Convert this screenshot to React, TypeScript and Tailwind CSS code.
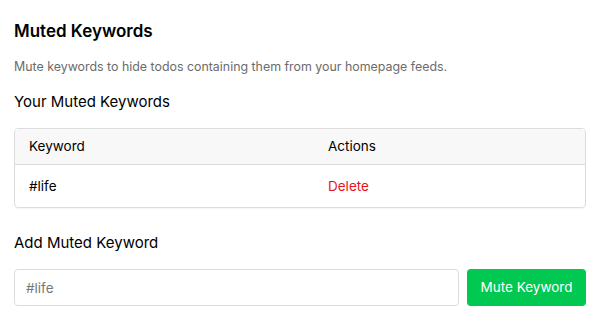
import { useState } from 'react';

export default function App() {
  const [keywords, setKeywords] = useState<string[]>(['#life']);
  const [value, setValue] = useState('');

  return (
    <div className="min-h-screen bg-white px-[14px] pt-[20px] text-black" style={{ fontFamily: 'Inter, "Noto Sans", sans-serif' }}>
      <h1 className="text-[17px] font-semibold leading-[22px]">Muted Keywords</h1>
      <p className="mt-[17px] text-[12.4px] leading-[16px] text-[#6b6b6b]">
        Mute keywords to hide todos containing them from your homepage feeds.
      </p>
      <h2 className="mt-[17px] text-[15px] leading-[20px]">Your Muted Keywords</h2>

      <div className="mt-[16px] overflow-hidden rounded-[4px] border border-[#dcdcdc] shadow-[0_1px_1px_rgba(0,0,0,0.04)]">
        <div className="grid h-[36px] grid-cols-[299px_1fr] items-center border-b border-[#dcdcdc] bg-[#f8f8f8] px-[14px] text-[13.5px]">
          <span>Keyword</span>
          <span>Actions</span>
        </div>
        {keywords.map((k) => (
          <div key={k} className="grid h-[42px] grid-cols-[299px_1fr] items-center px-[14px] text-[13.5px]">
            <span>{k}</span>
            <button
              className="justify-self-start text-[#e5141f]"
              onClick={() => setKeywords(keywords.filter((x) => x !== k))}
            >
              Delete
            </button>
          </div>
        ))}
      </div>

      <h3 className="mt-[25px] text-[15px] leading-[20px]">Add Muted Keyword</h3>
      <form
        className="mt-[16px] flex gap-[8px]"
        onSubmit={(e) => {
          e.preventDefault();
          if (value.trim()) setKeywords([...keywords, value.trim()]);
          setValue('');
        }}
      >
        <input
          value={value}
          onChange={(e) => setValue(e.target.value)}
          placeholder="#life"
          className="h-[37px] flex-1 rounded-[4px] border border-[#dcdcdc] px-[11px] text-[13.5px] placeholder:text-[#777] outline-none"
        />
        <button type="submit" className="h-[37px] w-[119px] rounded-[4px] bg-[#00c851] text-[13.5px] text-white">
          Mute Keyword
        </button>
      </form>
    </div>
  );
}
